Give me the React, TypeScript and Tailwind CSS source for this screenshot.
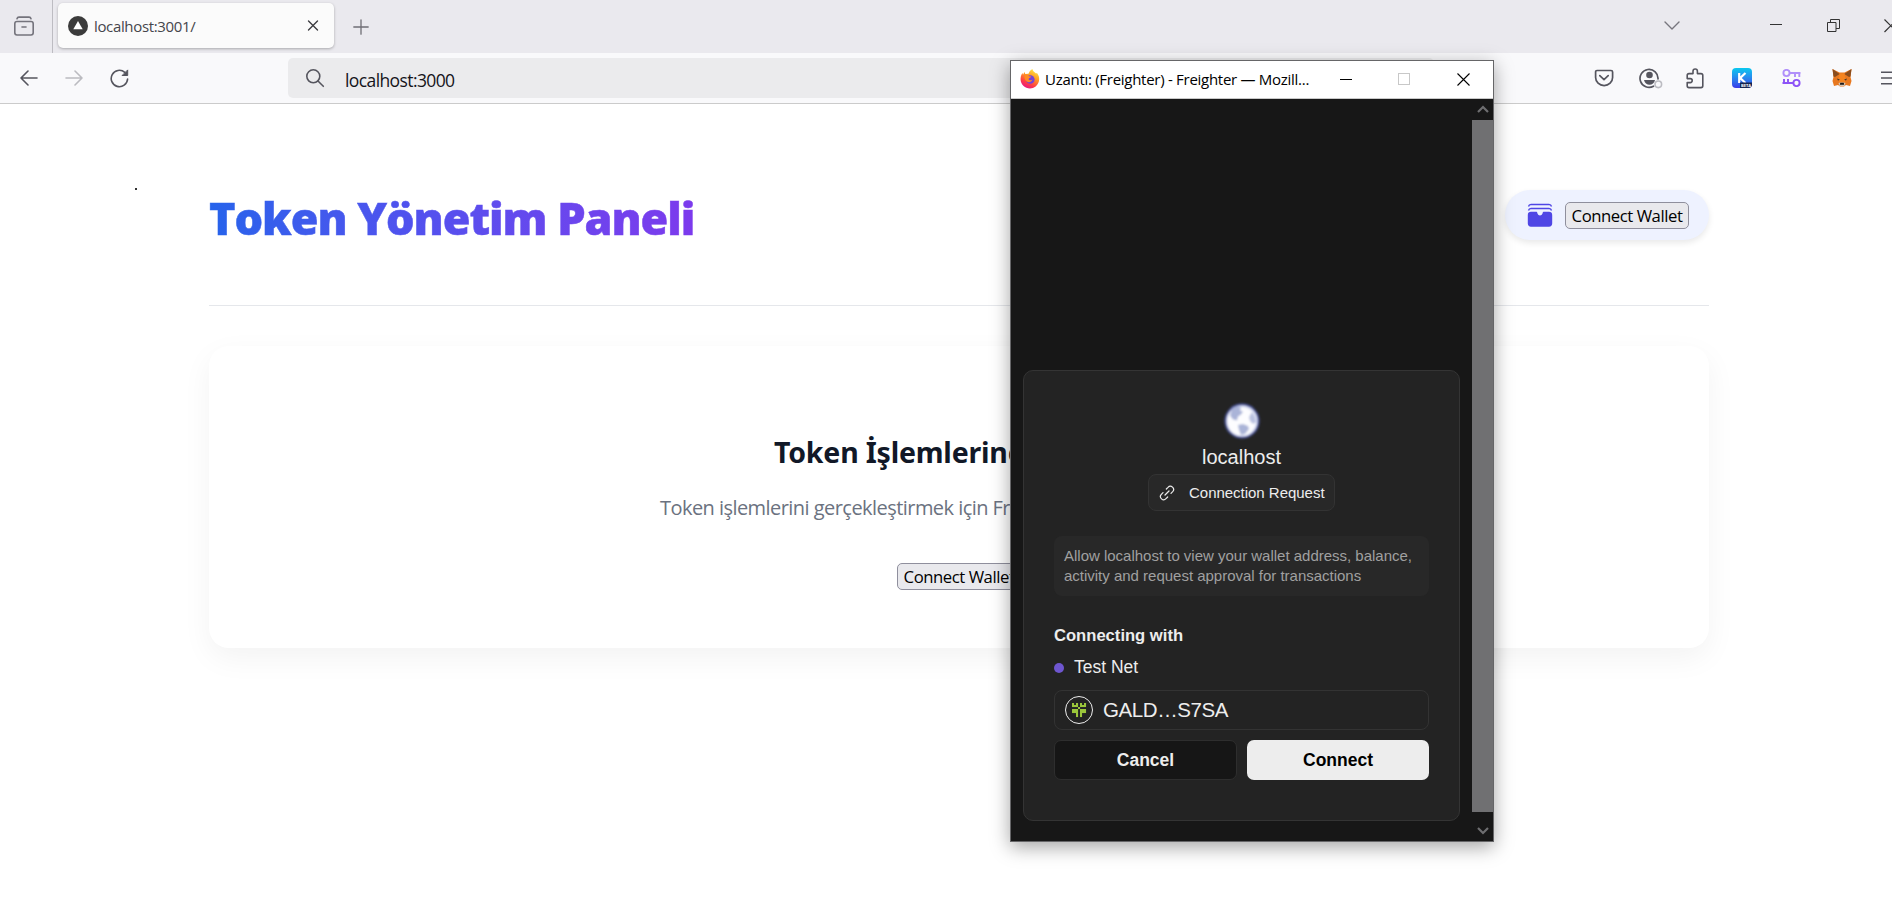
import React from "react";

const stroke = { fill: "none", stroke: "currentColor", strokeLinecap: "round" as const, strokeLinejoin: "round" as const };

function TabBar() {
  return (
    <div className="flex h-[53px] items-start bg-[#eae9ee]">
      <div className="flex h-[53px] w-[53px] shrink-0 items-center border-r border-[#bdbcc2] pl-[13px] text-[#74737c]">
        <svg width="22" height="22" viewBox="0 0 22 22" {...stroke} strokeWidth="1.6">
          <path d="M4 2.700C4.300 1.500 5 1.100 6 1.100h10c1 0 1.700.4 2 1.600" />
          <rect x="1.800" y="5.500" width="18.400" height="13.500" rx="2.200" />
          <path d="M9 11h4" />
        </svg>
      </div>
      <div className="ml-[5px] mt-[3px] flex h-[45px] w-[276px] shrink-0 items-center rounded-[5px] bg-[#fbfbfb] pl-[10px] pr-[15px] shadow-[0_1px_3px_rgba(0,0,0,0.28)]">
        <svg width="20" height="20" viewBox="0 0 20 20">
          <circle cx="10" cy="10" r="10" fill="#3b3b3b" />
          <path d="M10 5l4.700 8.300H5.300z" fill="#fff" />
        </svg>
        <span className="ml-[6px] flex-1 whitespace-nowrap text-[15px] leading-[20px] tracking-[-0.35px] text-[#45454b]">localhost:3001/</span>
        <svg width="12" height="12" viewBox="0 0 12 12" {...stroke} strokeWidth="1.400" className="text-[#3c3c40]">
          <path d="M1.500 1l9 9M10.500 1l-9 9" />
        </svg>
      </div>
      <svg width="16" height="16" viewBox="0 0 16 16" {...stroke} strokeWidth="1.300" className="ml-[19px] mt-[19px] text-[#6f6e75]">
        <path d="M8 .800v14.400M.800 8h14.400" />
      </svg>
      <div className="flex-1" />
      <svg width="16" height="10" viewBox="0 0 16 10" {...stroke} strokeWidth="1.400" className="mr-[90px] mt-[21px] shrink-0 text-[#77767d]">
        <path d="M1 1l7 7 7-7" />
      </svg>
      <div className="mr-[45px] mt-[24px] h-px w-[12px] shrink-0 bg-[#333]" />
      <svg width="13" height="13" viewBox="0 0 13 13" fill="none" stroke="#333" strokeWidth="1" className="mr-[44px] mt-[19px] shrink-0">
        <path d="M.5 3.500h8.500v9H.500zM3.500 3.500V.500h9v9H9" />
      </svg>
      <div className="mt-[19px] h-[14px] w-[8px] shrink-0 overflow-hidden">
        <svg width="14" height="14" viewBox="0 0 14 14" fill="none" stroke="#333" strokeWidth="1.200">
          <path d="M.500 .500l12.500 12.500M13 .500L.500 13" />
        </svg>
      </div>
    </div>
  );
}

function FoxIcon() {
  return (
    <svg width="20" height="20" viewBox="0 0 20 20" className="ml-[31px] shrink-0">
      <path d="M.500 1l7 3.500h5L19.500 1l-1 8 1 4-1.500 5-4-1-2 1.500H8L6 17l-4 1-1.500-5 1-4z" fill="#e8781f" />
      <path d="M.500 1l7.200 5-4.700 3-1.500-.500zM19.500 1l-7.200 5 4.700 3 1.500-.500z" fill="#8a4d1d" />
      <path d="M7.700 5.500h4.600l1.200 6-1.500 4H8l-1.500-4z" fill="#f5841f" />
      <path d="M5 10.500l3 1.300-2 .700zM15 10.500l-3 1.300 2 .700z" fill="#35322f" />
      <path d="M6.500 15l2-.500h3l2 .500-1 3h-5z" fill="#d9c3ae" />
      <path d="M8.200 14.800h3.600l.300 2H7.900z" fill="#1d1a19" />
    </svg>
  );
}

function Toolbar() {
  return (
    <div className="flex h-[51px] items-center border-b border-[#cbcbcb] bg-[#f9f9fb] text-[#55555e]">
      <svg width="18" height="16" viewBox="0 0 18 16" {...stroke} strokeWidth="1.600" className="ml-[20px] shrink-0">
        <path d="M17 8H1M8 1L1 8l7 7" />
      </svg>
      <svg width="18" height="16" viewBox="0 0 18 16" {...stroke} strokeWidth="1.600" className="ml-[27px] shrink-0 text-[#bbbbc0]">
        <path d="M1 8h16M10 1l7 7-7 7" />
      </svg>
      <svg width="19" height="19" viewBox="0 0 19 19" {...stroke} strokeWidth="1.600" className="ml-[27px] shrink-0">
        <path d="M17.600 10A8.200 8.200 0 1 1 14.800 3.300" />
        <path d="M17.700 1.300v5.200h-5.200z" fill="currentColor" strokeWidth="1" />
      </svg>
      <div className="ml-[159px] flex h-[40px] w-[1146px] shrink-0 items-center rounded-[5px] bg-[#ebebed] pl-[17px]">
        <svg width="20" height="20" viewBox="0 0 20 20" {...stroke} strokeWidth="1.600">
          <circle cx="8.300" cy="8.300" r="6.500" />
          <path d="M13 13l5.300 5.300" />
        </svg>
        <span className="ml-[20px] mt-[3px] whitespace-nowrap text-[17.500px] leading-[24px] tracking-[-0.600px] text-[#15141a]">localhost:3000</span>
      </div>
      <div className="flex-1" />
      <svg width="20" height="18" viewBox="0 0 20 18" {...stroke} strokeWidth="1.700" className="shrink-0">
        <path d="M3 1.500h14c1 0 1.600.600 1.600 1.600v5.400a8.400 8 0 0 1-17 0V3.100c0-1 .600-1.600 1.400-1.600z" />
        <path d="M5.800 6.600l4.200 4 4.200-4" />
      </svg>
      <svg width="24" height="22" viewBox="0 0 24 22" fill="none" className="ml-[25px] shrink-0">
        <path d="M14.500 19.200A9 9 0 1 1 19 12" stroke="#55555e" strokeWidth="1.700" strokeLinecap="round" />
        <circle cx="10.500" cy="8" r="3.300" fill="#55555e" />
        <path d="M5 13h11c-.500 3-3 4.700-5.500 4.700S5.500 16 5 13z" fill="#55555e" />
        <circle cx="19.300" cy="17.300" r="3.300" stroke="#bcbcc2" strokeWidth="1.600" fill="#f9f9fb" />
      </svg>
      <svg width="18" height="21" viewBox="0 0 18 21" {...stroke} strokeWidth="1.600" className="ml-[23px] shrink-0">
        <path d="M7 5.600V3.200a2.200 2.200 0 0 1 4.400 0v2.400H15c1.200 0 1.800.600 1.800 1.800v10.400c0 1.200-.600 1.800-1.800 1.800H3c-1.200 0-1.800-.600-1.800-1.800V14.600h3a2 2 0 0 0 0-4h-3V7.400c0-1.200.600-1.800 1.800-1.800z" />
      </svg>
      <div className="relative ml-[28px] flex h-5 w-5 shrink-0 justify-center overflow-hidden rounded-[4px] bg-linear-to-b from-[#08c8ee] to-[#3a35e8]">
        <svg width="20" height="20" viewBox="0 0 20 20">
          <path d="M7.200 5v10M13.500 5l-5.300 5 5.300 5" stroke="#fff" strokeWidth="2.200" fill="none" />
          <rect x="8" y="14.500" width="12" height="5.500" fill="#15254f" />
        </svg>
        <span className="absolute bottom-0 right-[1px] text-[4px] font-bold leading-[5px] text-white">BETA</span>
      </div>
      <svg width="19" height="18" viewBox="0 0 19 18" fill="none" stroke="#b190fa" strokeWidth="1.900" className="ml-[30px] shrink-0">
        <circle cx="4.500" cy="4" r="3.100" />
        <path d="M7.500 4H18.500M13 4v4M17.300 4v4" />
        <circle cx="14.500" cy="14" r="3.100" stroke="#8d53f7" />
        <path d="M.500 14h11M2 14v-4M6 14v-4" stroke="#8d53f7" />
      </svg>
      <FoxIcon />
      <svg width="11" height="14" viewBox="0 0 11 14" stroke="#55555e" strokeWidth="1.500" className="ml-[29px] shrink-0">
        <path d="M0 1.200H11M0 7H11M0 12.800H11" />
      </svg>
    </div>
  );
}

function ConnectWalletButton() {
  return (
    <button className="h-[27px] w-[124px] shrink-0 whitespace-nowrap rounded-[5px] border border-[#8f8f9d] bg-[#e9e9ed] text-center text-[16.700px] leading-[25px] tracking-[-0.450px] text-black">
      Connect Wallet
    </button>
  );
}

function Page() {
  return (
    <main className="h-[811px] bg-white">
      <div className="mx-[209px] w-[1500px]">
        <header className="flex h-[202px] items-start justify-between border-b border-[#e5e7eb] pt-[86px]">
          <h1 className="mt-[-1px] bg-linear-to-r from-[#2563eb] via-[#4f52ee] via-40% to-[#7c3aed] bg-clip-text whitespace-nowrap font-['Open_Sans'] text-[45px] font-extrabold leading-[58px] tracking-[-1.070px] text-transparent [-webkit-text-stroke:0.5px_transparent]">
            Token Yönetim Paneli
          </h1>
          <div className="flex h-[50px] w-[204px] items-center rounded-full bg-[#eef2ff] pl-[22px] shadow-[0_3px_6px_rgba(0,0,0,0.09)]">
            <svg width="26" height="25" viewBox="0 0 26 25" className="mr-[12px] shrink-0">
              <path d="M1.500 3.500Q2 1.500 4 1.500h18q2 0 2.500 2M1.500 7.500Q2 5.500 4 5.500h18q2 0 2.500 2" fill="none" stroke="#4f46e5" strokeWidth="1.400" />
              <path d="M4 8.800h5.500c.700 0 .700 1 1 1.800.500 1.300 1.300 2 2.500 2s2-.700 2.500-2c.300-.800.300-1.800 1-1.800H22c2 0 3.200 1.200 3.200 3.200v8.500c0 2-1.200 3.200-3.200 3.200H4c-2 0-3.200-1.200-3.200-3.200V12c0-2 1.200-3.200 3.200-3.200z" fill="#4f46e5" />
            </svg>
            <ConnectWalletButton />
          </div>
        </header>
        <section className="mt-[40px] flex h-[302px] flex-col items-center rounded-[20px] bg-white pt-[86px] shadow-[0_10px_30px_rgba(0,0,0,0.05)]">
          <h2 className="w-[370px] whitespace-nowrap font-['Noto_Sans'] text-[28.500px] font-bold leading-[40px] tracking-[-0.200px] text-[#111827]">Token İşlemlerine</h2>
          <p className="mt-[21px] w-[598px] whitespace-nowrap text-[20px] leading-[30px] tracking-[-0.550px] text-[#6b7280]">
            Token işlemlerini gerçekleştirmek için Freighter
          </p>
          <div className="mt-[40px] flex">
            <ConnectWalletButton />
          </div>
        </section>
      </div>
    </main>
  );
}

function FirefoxLogo() {
  return (
    <svg width="20" height="20" viewBox="0 0 20 20" className="shrink-0">
      <defs>
        <linearGradient id="flame" x1="0.8" y1="0" x2="0.3" y2="1">
          <stop offset="0" stopColor="#fff04a" />
          <stop offset="0.4" stopColor="#ff9a22" />
          <stop offset="0.75" stopColor="#ff3b47" />
          <stop offset="1" stopColor="#e31587" />
        </linearGradient>
      </defs>
      <path d="M12.300 0c.600 2.500 2.500 3 3.700 4.500l1-.500c2 2.500 2.600 5 2 8-1 4.500-4.800 7.500-9 7.500-5 0-9-3.800-9.400-8.500-.200-2.500.400-5 1.900-7l.500 1.700L4.500 3l.800 2 3.200-.200C9 3 10.500 1 12.300 0z" fill="url(#flame)" />
      <circle cx="10.300" cy="10.500" r="4.300" fill="#7543d8" />
      <path d="M4.500 6.500c2-.800 3.500-.500 4.500.700l2.200.300c-.200 1.200-2.200 1.300-2.700 2.500.500 1.500 2.500 1.500 4 .600-1 2.600-4 3.400-6 1.700-1.500-1.300-2.300-3.300-2-5.800z" fill="#ff8b23" />
    </svg>
  );
}

const avatar = ["#.#.#.#", "###.###", "...#...", "###.###", "###.###", "..#.#..", "..#.#.."];

function Popup() {
  return (
    <div className="absolute left-[1010px] top-[60px] flex h-[782px] w-[484px] flex-col border border-[#666668] bg-[#171717] shadow-[0_5px_18px_rgba(0,0,0,0.36)]">
      <div className="flex h-[38px] shrink-0 items-center border-b border-[#c9c9c9] bg-white pb-px pl-[9px]">
        <FirefoxLogo />
        <span className="ml-[5px] w-[295px] whitespace-nowrap text-[15px] leading-[20px] tracking-[-0.280px] text-black">Uzantı: (Freighter) - Freighter — Mozill...</span>
        <div className="h-px w-[12px] bg-black" />
        <div className="ml-[46px] h-[12px] w-[12px] border border-[#c8c8c8]" />
        <svg width="13" height="13" viewBox="0 0 13 13" stroke="#000" strokeWidth="1.100" className="ml-[47px]">
          <path d="M.500 .500l12 12M12.500 .500l-12 12" />
        </svg>
      </div>
      <div className="flex min-h-0 flex-1 font-['Liberation_Sans',Arial,sans-serif] text-[#ededed]">
        <div className="flex-1 pl-[12px] pt-[271px]">
          <div className="flex h-[451px] w-[437px] flex-col items-center rounded-[10px] border border-[#343434] bg-[#232323] px-[30px] pt-[32px]">
            <svg width="36" height="36" viewBox="0 0 36 36" className="shrink-0 overflow-visible">
              <defs>
                <filter id="soft" x="-20%" y="-20%" width="140%" height="140%">
                  <feGaussianBlur stdDeviation="0.8" />
                </filter>
              </defs>
              <g filter="url(#soft)">
                <circle cx="18" cy="18" r="17.500" fill="#4f5aa2" />
                <circle cx="18" cy="18" r="15.500" fill="#dfe4f6" />
                <circle cx="17.500" cy="18.500" r="14" fill="#fdfdff" />
                <path d="M8 6c3-3 7-3 9-1.500l-1 3 3 1-2 3-3 2-1 4-4-1-3-4z" fill="#aab4d8" />
                <path d="M14 22l5-1 5 2 1 3-4 5-4 1-2-5z" fill="#aab4d8" />
                <path d="M28 9l3 5 1 5-3 2-3-3-1-4z" fill="#b9c1e0" />
              </g>
            </svg>
            <div className="mt-[4px] text-[20px] leading-[28px]">localhost</div>
            <div className="mt-[3px] flex h-[37px] w-[187px] shrink-0 items-center rounded-[8px] border border-[#333] bg-[#282828] pl-[10px]">
              <svg width="16" height="16" viewBox="0 0 24 24" {...stroke} strokeWidth="1.800">
                <path d="M9 15l6-6M11 6l2.500-2.500a4.600 4.600 0 0 1 7 6.500L18 12.500M13 18l-2.500 2.500a4.600 4.600 0 0 1-7-6.500L6 11.500" />
              </svg>
              <span className="ml-[14px] whitespace-nowrap text-[15px] leading-[20px] tracking-[-0.02px]">Connection Request</span>
            </div>
            <div className="mt-[25px] h-[60px] w-full shrink-0 whitespace-nowrap rounded-[8px] bg-[#282828] pl-[10px] pt-[10px] text-[15px] leading-[20px] tracking-[-0.01px] text-[#a0a0a0]">
              Allow localhost to view your wallet address, balance,
              <br />
              activity and request approval for transactions
            </div>
            <div className="mt-[29px] w-full text-[16.600px] font-bold leading-[22px]">Connecting with</div>
            <div className="mt-[8px] flex h-[25px] w-full items-center text-[17.500px]">
              <span className="mr-[10px] h-[10px] w-[10px] rounded-full bg-[#6e56cf]" />
              Test Net
            </div>
            <div className="mt-[10px] flex h-[40px] w-full shrink-0 items-center rounded-[8px] border border-[#333] pl-[9px]">
              <svg width="30" height="30" viewBox="0 0 30 30">
                <circle cx="15" cy="15" r="13.500" fill="none" stroke="#ededed" strokeWidth="1" />
                {avatar.map((row, y) =>
                  row.split("").map((c, x) => (c === "#" ? <rect key={x + "-" + y} x={8 + x * 2} y={8 + y * 2} width="2.050" height="2.050" fill="#9bc63b" /> : null)),
                )}
              </svg>
              <span className="ml-[9px] text-[20.500px] leading-[26px] tracking-[-0.4px]">GALD…S7SA</span>
            </div>
            <div className="mt-[10px] flex h-[40px] w-full shrink-0 gap-[10px] text-[17.500px] font-bold">
              <button className="w-[183px] rounded-[7px] border border-[#2e2e2e] bg-[#161616]">Cancel</button>
              <button className="w-[182px] rounded-[7px] bg-[#ededed] text-black">Connect</button>
            </div>
          </div>
        </div>
        <div className="flex w-[21px] flex-col items-center bg-[#171717] text-[#6e6e70]">
          <svg width="12" height="21" viewBox="0 0 12 21" fill="none" stroke="currentColor" strokeWidth="2.200">
            <path d="M1 13l5-5 5 5" />
          </svg>
          <div className="h-[692px] w-full bg-[#707072]" />
          <svg width="12" height="29" viewBox="0 0 12 29" fill="none" stroke="currentColor" strokeWidth="2.200">
            <path d="M1 16l5 5 5-5" />
          </svg>
        </div>
      </div>
    </div>
  );
}

export default function App() {
  return (
    <div className="relative h-[915px] w-[1892px] overflow-hidden bg-white font-['Open_Sans','Noto_Sans',sans-serif]">
      <TabBar />
      <Toolbar />
      <Page />
      <span className="absolute left-[135px] top-[188px] h-[2px] w-[2px] bg-[#333]" />
      <Popup />
    </div>
  );
}
